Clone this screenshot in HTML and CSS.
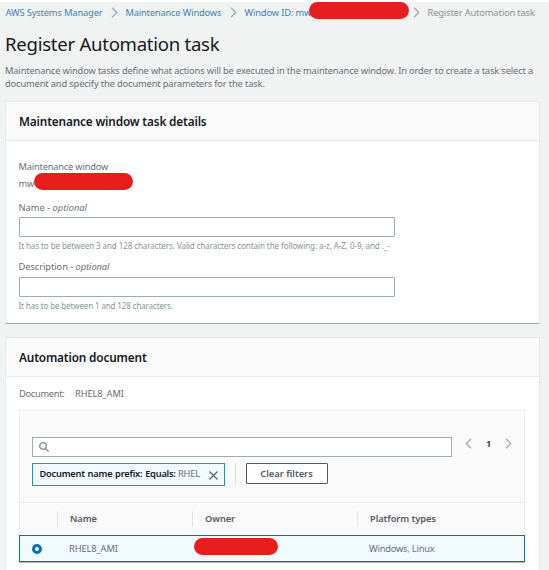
FILE: index.html
```html
<!DOCTYPE html>
<html lang="en">
<head>
<meta charset="utf-8">
<title>Register Automation task</title>
<link rel="stylesheet" href="styles.css">
</head>
<body>
<nav class="crumbs">
  <a class="crumb c1">AWS Systems Manager</a>
  <svg class="sep" viewBox="0 0 7 11"><path d="M1 .8 5.7 5.5 1 10.2"/></svg>
  <a class="crumb c2">Maintenance Windows</a>
  <svg class="sep" viewBox="0 0 7 11"><path d="M1 .8 5.7 5.5 1 10.2"/></svg>
  <a class="crumb c3">Window ID: mw</a><span class="redact redact-crumb"></span>
  <svg class="sep" viewBox="0 0 7 11"><path d="M1 .8 5.7 5.5 1 10.2"/></svg>
  <span class="crumb current">Register Automation task</span>
</nav>
<h1><span>Register Automation task</span></h1>
<p class="intro"><span class="i1">Maintenance window tasks define what actions will be executed in the maintenance window. In order to create a task select a</span><br><span class="i2">document and specify the document parameters for the task.</span></p>

<section class="card details">
  <header><h2 class="h-details">Maintenance window task details</h2></header>
  <div class="form">
    <div class="label l-window"><span>Maintenance window</span></div>
    <div class="value"><span>mw</span><span class="redact redact-value"></span></div>
    <label class="label l-name"><span>Name - <i>optional</i></span></label>
    <input class="field" type="text">
    <div class="hint"><span class="hint1">It has to be between 3 and 128 characters. Valid characters contain the following: a-z, A-Z, 0-9, and ._-</span></div>
    <label class="label l-desc"><span>Description - <i>optional</i></span></label>
    <input class="field" type="text">
    <div class="hint"><span class="hint2">It has to be between 1 and 128 characters.</span></div>
  </div>
</section>

<section class="card document">
  <header><h2 class="h-doc">Automation document</h2></header>
  <div class="doc-line"><span class="doc-key">Document:</span><span class="ami">RHEL8_AMI</span></div>
  <div class="panel">
    <div class="tools">
      <div class="search"><svg viewBox="0 0 10 10"><circle cx="4" cy="4" r="3.3"/><path d="m6.4 6.4 3.2 3.2"/></svg></div>
      <div class="pager">
        <svg viewBox="0 0 7 11"><path d="M6 .8 1.3 5.5 6 10.2"/></svg>
        <b>1</b>
        <svg viewBox="0 0 7 11"><path d="M1 .8 5.7 5.5 1 10.2"/></svg>
      </div>
    </div>
    <div class="filters">
      <div class="token"><span><b>Document name prefix: Equals:</b> RHEL</span><svg viewBox="0 0 9 9"><path d="m.5.5 8 8m0-8-8 8"/></svg></div>
      <div class="rule"></div>
      <button type="button"><span>Clear filters</span></button>
    </div>
    <div class="row head">
      <div></div>
      <div class="cell"><span class="th1">Name</span></div>
      <div class="cell"><span class="th2">Owner</span></div>
      <div class="cell"><span class="th3">Platform types</span></div>
    </div>
    <div class="row selected">
      <div class="radio"></div>
      <div><span class="ami">RHEL8_AMI</span></div>
      <div><span class="redact redact-owner"></span></div>
      <div><span class="platform">Windows, Linux</span></div>
    </div>
  </div>
</section>
</body>
</html>
```
FILE: styles.css
```css
* { box-sizing: border-box; }
body {
  margin: 0;
  height: 570px;
  overflow: hidden;
  border-top: 2px solid #fff;
  background: #f1f3f3;
  font: 9.3px/13px "Noto Sans", sans-serif;
  letter-spacing: -.14px;
  color: #687078;
}
svg { fill: none; stroke: #a3b1b2; stroke-width: 1.5; flex: none; }
h1, h2, p { margin: 0; }
.redact { flex: none; background: #e81d1d; border-radius: 9px; }

.crumbs { display: flex; align-items: center; height: 20px; padding-left: 5.5px; white-space: nowrap; }
.crumb { color: #3b82bd; flex: none; }
.c1 { width: 97px; }
.c2 { width: 96px; letter-spacing: -.17px; }
.c3 { width: 64px; }
.sep { width: 7px; height: 11px; margin: 0 8px; }
.redact-crumb { width: 100px; height: 17px; margin: -3px -4px 0 0; }
.crumb.current { color: #879196; }

h1 { height: 42px; padding-left: 5px; font-size: 18.6px; line-height: 44px; font-weight: 400; letter-spacing: -.28px; color: #16191f; }
.intro { height: 37px; padding-left: 5px; white-space: nowrap; }
.i1, .i2 { letter-spacing: -.14px; }

.card { width: 535px; margin-left: 4.5px; background: #fff; border: 1px solid #e6eaea; }
.card header { height: 39px; padding-left: 13.5px; background: #fafafa; border-bottom: 1px solid #e6eaea; }
h2 { font-size: 11.8px; line-height: 39px; color: #16191f; font-weight: 600; letter-spacing: -.15px; }
.details { height: 223px; border-bottom-color: #9aa9aa; }
.form { padding: 19px 0 0 13px; }
.label { display: block; }
.l-window { letter-spacing: -.2px; }
.value { display: flex; align-items: center; height: 20px; }
.redact-value { width: 99px; height: 17px; margin-top: -3px; }
.l-name { margin-top: 8px; letter-spacing: 0; }
.field { display: block; width: 376px; height: 20px; margin: 3px 0 0; border: 1px solid #9cadae; border-radius: 1px; padding: 0; background: #fff; }
.hint { margin-top: 2px; font-size: 8px; letter-spacing: -.07px; color: #879596; white-space: nowrap; }
.hint2 { letter-spacing: -.12px; }
.l-desc { margin-top: 8px; letter-spacing: -.06px; }
.l-desc + .field { margin-top: 4px; }

.document { height: 260px; margin-top: 13px; }
.doc-line { display: flex; padding: 9.5px 0 0 13.5px; height: 33px; }
.doc-key { width: 56px; letter-spacing: -.3px; }
.panel { width: 506px; margin-left: 13px; border: 1px solid #eaeded; border-bottom: 0; background: #fafafa; }
.tools { display: flex; padding: 26px 0 0 12px; }
.search { display: flex; align-items: center; width: 420px; height: 20px; padding-left: 6px; border: 1px solid #9cadae; background: #fff; }
.search svg { width: 10px; height: 10px; stroke: #7d898b; stroke-width: 1.3; }
.pager { display: flex; align-items: center; height: 12px; margin-left: 13.5px; }
.pager svg { width: 7px; height: 11px; }
.pager b { width: 33px; text-align: center; color: #16191f; font-weight: 600; }
.filters { display: flex; height: 39px; margin-top: 6px; padding-left: 12px; }
.token { display: flex; align-items: flex-start; justify-content: space-between; width: 193px; height: 23px; padding: 3px 6px 0 7px; border: 1px solid #00a1c9; background: #f1faff; white-space: nowrap; }
.token b { color: #16191f; font-weight: 600; letter-spacing: -.24px; word-spacing: .6px; }
.token svg { width: 9px; height: 9px; margin-top: 4px; stroke: #545b64; stroke-width: 1.1; }
.rule { width: 1px; height: 21px; margin: 0 10px; background: #d5dbdb; }
button { width: 82px; height: 21px; padding: 0; border: 1px solid #545b64; border-radius: 1px; background: #fff; font: 600 9.3px/19px "Noto Sans", sans-serif; color: #545b64; }
.row { display: grid; grid-template-columns: 37px 135px 165px 1fr; align-items: center; white-space: nowrap; }
.head { height: 33px; border-top: 1px solid #eaeded; font-weight: 600; color: #545b64; letter-spacing: -.07px; }
.cell { height: 16px; line-height: 15px; border-left: 1px solid #e1e4e4; padding-left: 12.5px; }
.selected { height: 27px; margin: 0 -1px; border: 1px solid #0073bb; background: #f1faff; box-shadow: 0 1px #aab7b8; }
.selected > div:not(.radio) { padding-left: 12.5px; }
.radio { width: 10px; height: 10px; margin-left: 12px; border: 3px solid #0073bb; border-radius: 50%; background: #fff; }
.redact-owner { display: block; width: 84px; height: 17px; margin: -4px 0 0 -10px; }
.platform { letter-spacing: -.2px; }
.ami { letter-spacing: -.1px; }
```
